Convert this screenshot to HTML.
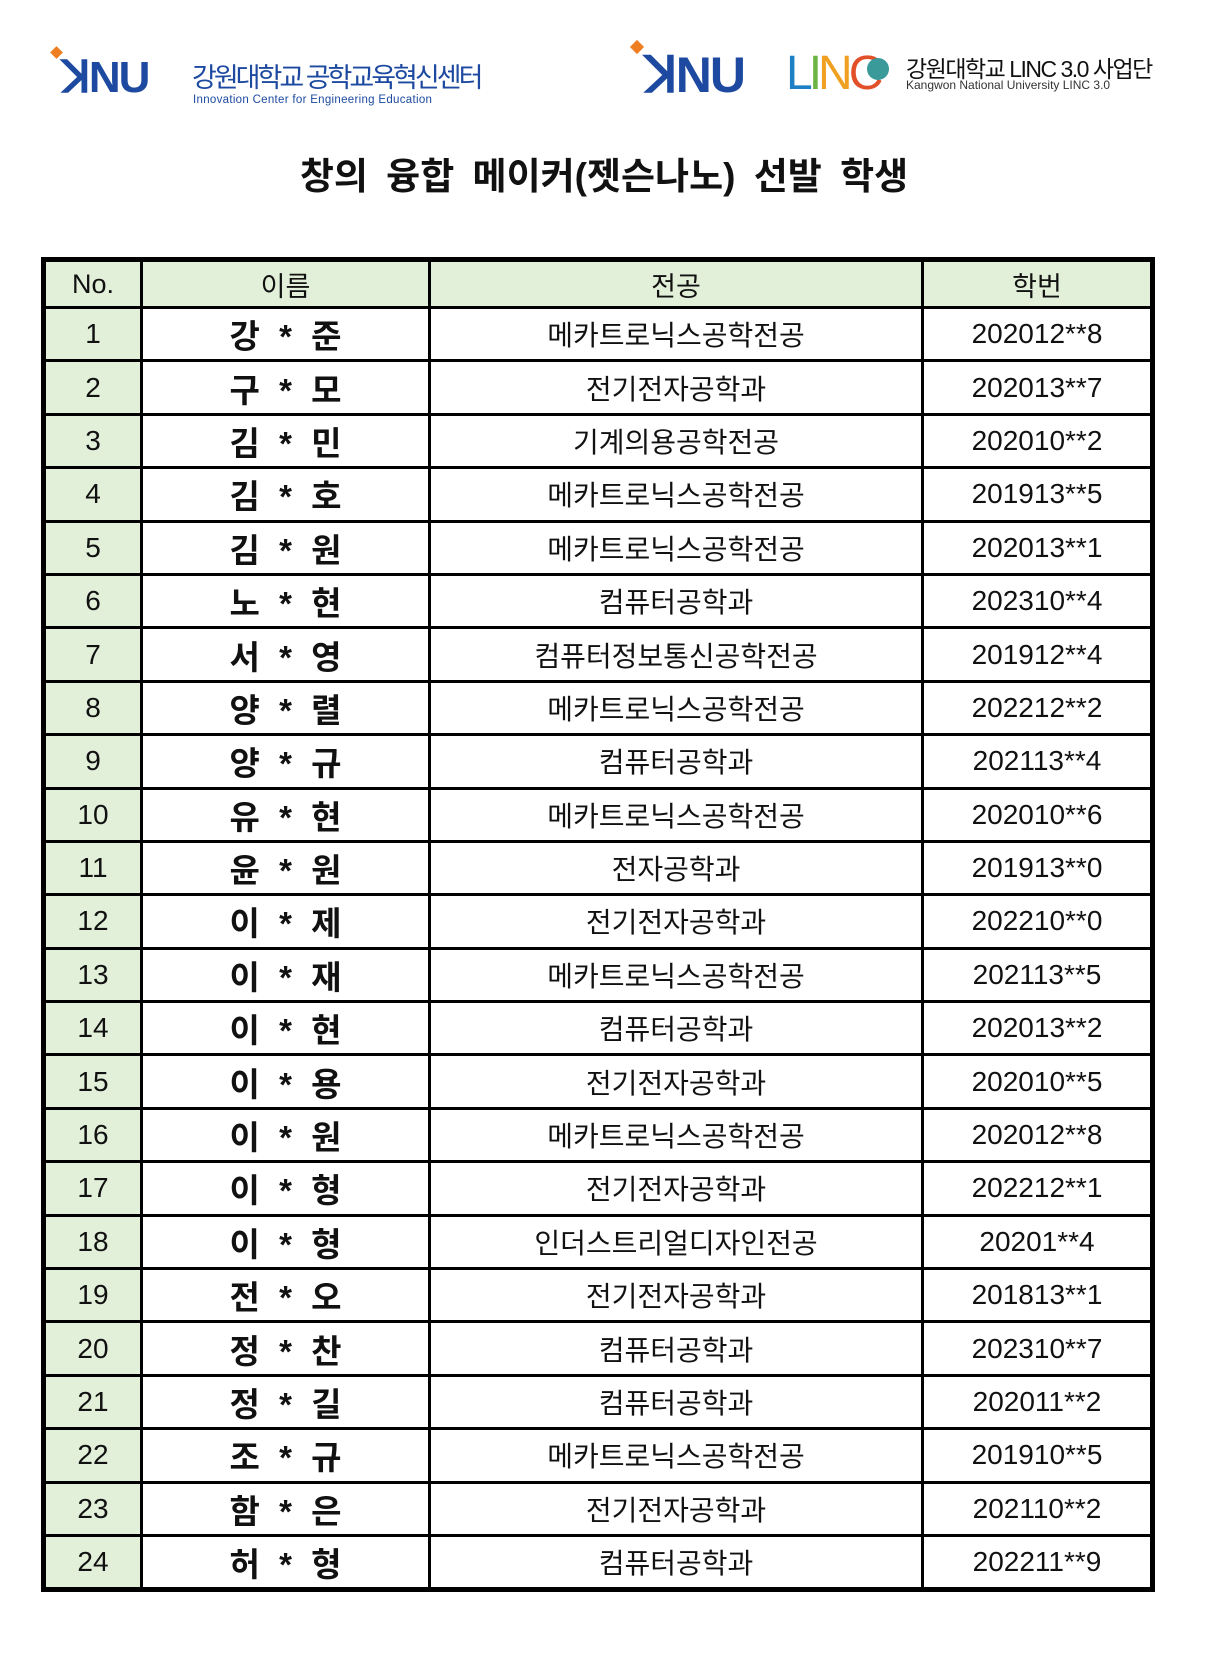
<!DOCTYPE html>
<html><head><meta charset="utf-8"><style>
body{margin:0;background:#fff;width:1208px;height:1654px;position:relative;font-family:"Liberation Sans","Noto Sans CJK KR",sans-serif;overflow:hidden}
.abs{position:absolute;white-space:nowrap}
table{position:absolute;left:41px;top:257px;width:1114px;border-collapse:collapse;border:5px solid #000}
td{border:3px solid #000;text-align:center;height:50.4px;padding:0;font-size:28px;color:#111}
tr.h td{background:#e2efd9;font-size:27px;height:44px}
td.n{background:#e2efd9}
td.nm{font-weight:bold;font-size:33px;word-spacing:10px}
</style></head><body>
<div class="abs" style="left:52px;top:48px;width:9px;height:9px;background:#ef7d22;transform:rotate(45deg)"></div>
<div class="abs" style="left:62px;top:52px;font:bold 44px 'Liberation Sans',sans-serif;color:#1d4aa0;letter-spacing:-2px">ꓘNU</div>
<div class="abs" style="left:192px;top:56px;font-size:27px;color:#1d4aa0;letter-spacing:-3px">강원대학교 공학교육혁신센터</div>
<div class="abs" style="left:193px;top:94px;font-size:11.5px;color:#1d4aa0;letter-spacing:0.3px">Innovation Center for Engineering Education</div>
<div class="abs" style="left:632px;top:42px;width:10px;height:10px;background:#ef7d22;transform:rotate(45deg)"></div>
<div class="abs" style="left:645px;top:46px;font:bold 50px 'Liberation Sans',sans-serif;color:#1d4aa0;letter-spacing:-2px">ꓘNU</div>
<div class="abs" style="left:786px;top:46px;font-size:48px;letter-spacing:-4px"><span style="color:#1d7fc4">L</span><span style="color:#6bb443">I</span><span style="color:#f0a020">N</span><span style="color:#e2502a">C</span></div>
<div class="abs" style="left:867px;top:58px;width:22px;height:22px;border-radius:50%;background:#3a9a9a"></div>
<div class="abs" style="left:906px;top:50px;font-size:23px;color:#111;letter-spacing:-1.5px">강원대학교 LINC 3.0 사업단</div>
<div class="abs" style="left:906px;top:78px;font-size:12px;color:#333">Kangwon National University LINC 3.0</div>
<div class="abs" style="left:0;width:1208px;text-align:center;top:146px;font-size:37px;font-weight:bold;color:#111;word-spacing:8px">창의 융합 메이커(젯슨나노) 선발 학생</div>
<table>
<colgroup><col style="width:98px"><col style="width:288px"><col style="width:493px"><col></colgroup>
<tr class="h"><td>No.</td><td>이름</td><td>전공</td><td>학번</td></tr>
<tr><td class="n">1</td><td class="nm">강 * 준</td><td>메카트로닉스공학전공</td><td>202012**8</td></tr>
<tr><td class="n">2</td><td class="nm">구 * 모</td><td>전기전자공학과</td><td>202013**7</td></tr>
<tr><td class="n">3</td><td class="nm">김 * 민</td><td>기계의용공학전공</td><td>202010**2</td></tr>
<tr><td class="n">4</td><td class="nm">김 * 호</td><td>메카트로닉스공학전공</td><td>201913**5</td></tr>
<tr><td class="n">5</td><td class="nm">김 * 원</td><td>메카트로닉스공학전공</td><td>202013**1</td></tr>
<tr><td class="n">6</td><td class="nm">노 * 현</td><td>컴퓨터공학과</td><td>202310**4</td></tr>
<tr><td class="n">7</td><td class="nm">서 * 영</td><td>컴퓨터정보통신공학전공</td><td>201912**4</td></tr>
<tr><td class="n">8</td><td class="nm">양 * 렬</td><td>메카트로닉스공학전공</td><td>202212**2</td></tr>
<tr><td class="n">9</td><td class="nm">양 * 규</td><td>컴퓨터공학과</td><td>202113**4</td></tr>
<tr><td class="n">10</td><td class="nm">유 * 현</td><td>메카트로닉스공학전공</td><td>202010**6</td></tr>
<tr><td class="n">11</td><td class="nm">윤 * 원</td><td>전자공학과</td><td>201913**0</td></tr>
<tr><td class="n">12</td><td class="nm">이 * 제</td><td>전기전자공학과</td><td>202210**0</td></tr>
<tr><td class="n">13</td><td class="nm">이 * 재</td><td>메카트로닉스공학전공</td><td>202113**5</td></tr>
<tr><td class="n">14</td><td class="nm">이 * 현</td><td>컴퓨터공학과</td><td>202013**2</td></tr>
<tr><td class="n">15</td><td class="nm">이 * 용</td><td>전기전자공학과</td><td>202010**5</td></tr>
<tr><td class="n">16</td><td class="nm">이 * 원</td><td>메카트로닉스공학전공</td><td>202012**8</td></tr>
<tr><td class="n">17</td><td class="nm">이 * 형</td><td>전기전자공학과</td><td>202212**1</td></tr>
<tr><td class="n">18</td><td class="nm">이 * 형</td><td>인더스트리얼디자인전공</td><td>20201**4</td></tr>
<tr><td class="n">19</td><td class="nm">전 * 오</td><td>전기전자공학과</td><td>201813**1</td></tr>
<tr><td class="n">20</td><td class="nm">정 * 찬</td><td>컴퓨터공학과</td><td>202310**7</td></tr>
<tr><td class="n">21</td><td class="nm">정 * 길</td><td>컴퓨터공학과</td><td>202011**2</td></tr>
<tr><td class="n">22</td><td class="nm">조 * 규</td><td>메카트로닉스공학전공</td><td>201910**5</td></tr>
<tr><td class="n">23</td><td class="nm">함 * 은</td><td>전기전자공학과</td><td>202110**2</td></tr>
<tr><td class="n">24</td><td class="nm">허 * 형</td><td>컴퓨터공학과</td><td>202211**9</td></tr>
</table>
</body></html>
